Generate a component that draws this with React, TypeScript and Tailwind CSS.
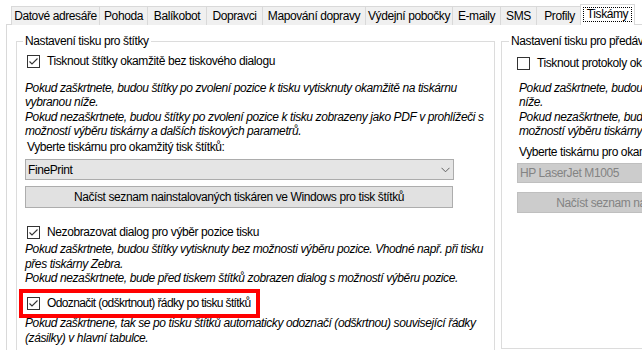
import React from "react";

const tabs = [
  { label: "Datové adresáře", w: "w-[88px]" },
  { label: "Pohoda", w: "w-[48px]" },
  { label: "Balíkobot", w: "w-[59px]" },
  { label: "Dopravci", w: "w-[56px]" },
  { label: "Mapování dopravy", w: "w-[103px]" },
  { label: "Výdejní pobočky", w: "w-[87px]" },
  { label: "E-maily", w: "w-[48px]" },
  { label: "SMS", w: "w-[36px]" },
  { label: "Profily", w: "w-[46px]" },
];

function Checkbox({ checked }: { checked?: boolean }) {
  return (
    <span className="flex h-[13px] w-[13px] shrink-0 items-center justify-center border border-[#333333] bg-white">
      {checked && (
        <svg width="11" height="11" viewBox="0 0 11 11">
          <path d="M1.5 5.5 L4 8 L9.5 2.5" fill="none" stroke="#333333" strokeWidth="1.1" />
        </svg>
      )}
    </span>
  );
}

function Chevron() {
  return (
    <svg width="9" height="6" viewBox="0 0 9 6">
      <path d="M0.5 0.8 L4.5 4.8 L8.5 0.8" fill="none" stroke="#606060" strokeWidth="1" />
    </svg>
  );
}

export default function App() {
  return (
    <div className="h-[350px] w-[642px] overflow-hidden bg-white font-['Liberation_Sans',Arial,sans-serif] text-[12px] tracking-[-0.4px] text-black">
      {/* tab strip */}
      <div className="flex h-[25px] items-end pl-[11px]">
        {tabs.map((t) => (
          <div
            key={t.label}
            className={`${t.w} flex h-[19px] items-center justify-center border-l border-t border-[#d9d9d9] bg-[#f0f0f0] leading-none whitespace-nowrap`}
          >
            {t.label}
          </div>
        ))}
        <div className="relative z-10 -mx-[2px] flex h-[21px] w-[55px] items-start justify-center border-x border-t border-[#d9d9d9] bg-white pt-[2px]">
          <span className="border border-dotted border-black px-[3px] leading-[13px]">Tiskámy</span>
        </div>
        <div className="h-[19px] border-l border-[#d9d9d9]" />
      </div>

      {/* tab page */}
      <div className="-mt-px ml-[6px] flex h-[330px] gap-[6px] border-l border-t border-[#d9d9d9] pl-[9px] pt-[9px]">
        <fieldset className="h-[330px] w-[479px] shrink-0 border border-[#dcdcdc]">
          <legend className="ml-[6px] px-[2px] leading-[14px]">Nastavení tisku pro štítky</legend>

          <div className="pl-[8px]">
            <label className="mt-[6px] flex h-[14px] items-center gap-[7px] pl-[2px]">
              <Checkbox checked />
              <span>Tisknout štítky okamžitě bez tiskového dialogu</span>
            </label>
            <div className="mt-[13px] whitespace-nowrap italic leading-[14.33px]">
              <div>Pokud zaškrtnete, budou štítky po zvolení pozice k tisku vytisknuty okamžitě na tiskárnu</div>
              <div>vybranou níže.</div>
              <div>Pokud nezaškrtnete, budou štítky po zvolení pozice k tisku zobrazeny jako PDF v prohlížeči s</div>
              <div>možností výběru tiskárny a dalších tiskových parametrů.</div>
            </div>

            <div className="mt-[2px] pl-[2px] leading-[14px]">Vyberte tiskárnu pro okamžitý tisk štítků:</div>
            <div className="mt-[5px] flex h-[21px] w-[429px] items-center justify-between border border-[#acacac] bg-[#e5e5e5] pl-[2px] pr-[3px]">
              <span>FinePrint</span>
              <Chevron />
            </div>
            <button className="mt-[6px] flex h-[22px] w-[428px] items-center justify-center border border-[#adadad] bg-[#e1e1e1]">
              Načíst seznam nainstalovaných tiskáren ve Windows pro tisk štítků
            </button>

            <label className="mt-[17px] flex h-[14px] items-center gap-[7px] pl-[2px]">
              <Checkbox checked />
              <span>Nezobrazovat dialog pro výběr pozice tisku</span>
            </label>
            <div className="mt-[3px] whitespace-nowrap italic leading-[14.33px]">
              <div>Pokud zaškrtnete, budou štítky vytisknuty bez možnosti výběru pozice. Vhodné např. při tisku</div>
              <div>přes tiskárny Zebra.</div>
              <div>Pokud nezaškrtnete, bude před tiskem štítků zobrazen dialog s možností výběru pozice.</div>
            </div>

            <div className="relative mt-[11px]">
              <label className="flex h-[14px] items-center gap-[7px] pl-[2px]">
                <Checkbox checked />
                <span className="tracking-[-0.62px]">Odoznačit (odškrtnout) řádky po tisku štítků</span>
              </label>
              <div className="pointer-events-none absolute -top-[7px] left-[-6px] h-[29px] w-[241px] border-4 border-[#ff0000]" />
            </div>
            <div className="mt-[6px] whitespace-nowrap italic leading-[14.33px]">
              <div>Pokud zaškrtnene, tak se po tisku štítků automaticky odoznačí (odškrtnou) související řádky</div>
              <div>(zásilky) v hlavní tabulce.</div>
            </div>
          </div>
        </fieldset>

        <fieldset className="h-[315px] w-[300px] shrink-0 overflow-hidden border border-[#dcdcdc]">
          <legend className="ml-[7px] px-[2px] leading-[14px] whitespace-nowrap">Nastavení tisku pro předávací protokoly</legend>

          <div className="pl-[15px]">
            <label className="mt-[8px] flex h-[14px] items-center gap-[7px] whitespace-nowrap">
              <Checkbox />
              <span>Tisknout protokoly okamžitě bez tiskového dialogu</span>
            </label>
            <div className="mt-[11px] whitespace-nowrap pl-[2px] italic leading-[14.33px]">
              <div>Pokud zaškrtnete, budou protokoly vytisknuty okamžitě na tiskárnu vybranou</div>
              <div>níže.</div>
              <div>Pokud nezaškrtnete, budou protokoly zobrazeny jako PDF v prohlížeči s</div>
              <div>možností výběru tiskárny a dalších tiskových parametrů.</div>
            </div>

            <div className="mt-[7px] whitespace-nowrap pl-[2px] leading-[14px]">Vyberte tiskárnu pro okamžitý tisk protokolů:</div>
            <div className="mt-[4px] flex h-[20px] w-[429px] items-center border border-[#bfbfbf] bg-[#cccccc] pl-[2px] text-[#838383]">
              HP LaserJet M1005
            </div>
            <button className="mt-[9px] flex h-[21px] w-[428px] items-center justify-center whitespace-nowrap border border-[#bfbfbf] bg-[#cccccc] text-[#838383]">
              Načíst seznam nainstalovaných tiskáren ve Windows pro tisk protokolů
            </button>
          </div>
        </fieldset>
      </div>
    </div>
  );
}
